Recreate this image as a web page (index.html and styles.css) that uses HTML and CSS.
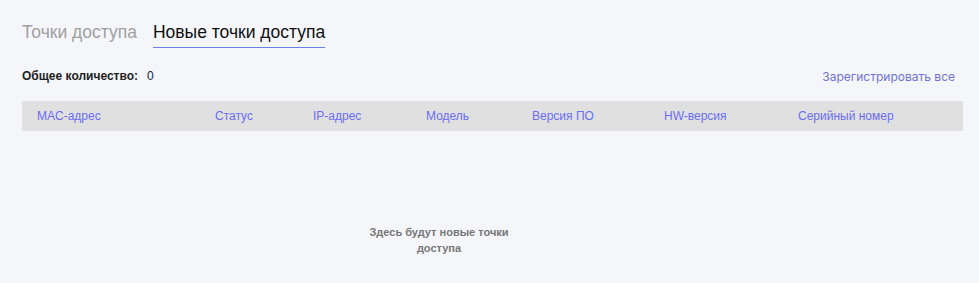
FILE: index.html
```html
<!DOCTYPE html>
<html lang="ru">
<head>
<meta charset="utf-8">
<link rel="stylesheet" href="styles.css">
</head>
<body>
<div class="page">
  <div class="tabs">
    <div class="tab">Точки доступа</div>
    <div class="tab active">Новые точки доступа</div>
  </div>
  <div class="summary">
    <div class="total"><span class="label">Общее количество:</span><span class="count">0</span></div>
    <a class="register">Зарегистрировать все</a>
  </div>
  <div class="thead">
    <div class="th c1">MAC-адрес</div>
    <div class="th c2">Статус</div>
    <div class="th c3">IP-адрес</div>
    <div class="th c4">Модель</div>
    <div class="th c5">Версия ПО</div>
    <div class="th c6">HW-версия</div>
    <div class="th c7">Серийный номер</div>
  </div>
  <div class="empty">
    <div class="empty-text">Здесь будут новые точки доступа</div>
  </div>
</div>
</body>
</html>
```
FILE: styles.css
```css
html, body {
  margin: 0;
  padding: 0;
  background: #f5f6fa;
}
.page {
  padding: 0 16px 0 22px;
  font-family: "Liberation Sans", Arial, sans-serif;
}
.tabs {
  display: flex;
  gap: 16px;
  padding-top: 21px;
}
.tab {
  font-size: 17.5px;
  line-height: 22px;
  color: #a0a0a0;
  padding-bottom: 4px;
  border-bottom: 1px solid transparent;
}
.tab.active {
  color: #111;
  border-bottom-color: #6b7fe8;
}
.summary {
  display: flex;
  justify-content: space-between;
  align-items: center;
  margin-top: 20px;
  height: 16px;
}
.total {
  font-size: 12px;
  font-weight: bold;
  color: #222;
  display: flex;
  gap: 9px;
}
.count {
  font-weight: normal;
  color: #223;
}
.register {
  font-family: Inter, "Liberation Sans", sans-serif;
  font-size: 12px;
  color: #6f73d6;
  margin-right: 8px;
}
.thead {
  margin-top: 17px;
  height: 30px;
  background: #e0e0e0;
  display: flex;
  align-items: center;
  font-size: 12px;
  color: #6a6ef5;
}
.th { flex: none; box-sizing: border-box; }
.c1 { padding-left: 15px; width: 193px; }
.c2 { width: 98px; }
.c3 { width: 113px; }
.c4 { width: 106px; }
.c5 { width: 132px; }
.c6 { width: 134px; }
.empty {
  display: flex;
  padding-top: 93px;
  padding-left: 342px;
}
.empty-text {
  width: 150px;
  text-align: center;
  font-size: 11px;
  line-height: 16px;
  font-weight: bold;
  color: #777;
}
```
